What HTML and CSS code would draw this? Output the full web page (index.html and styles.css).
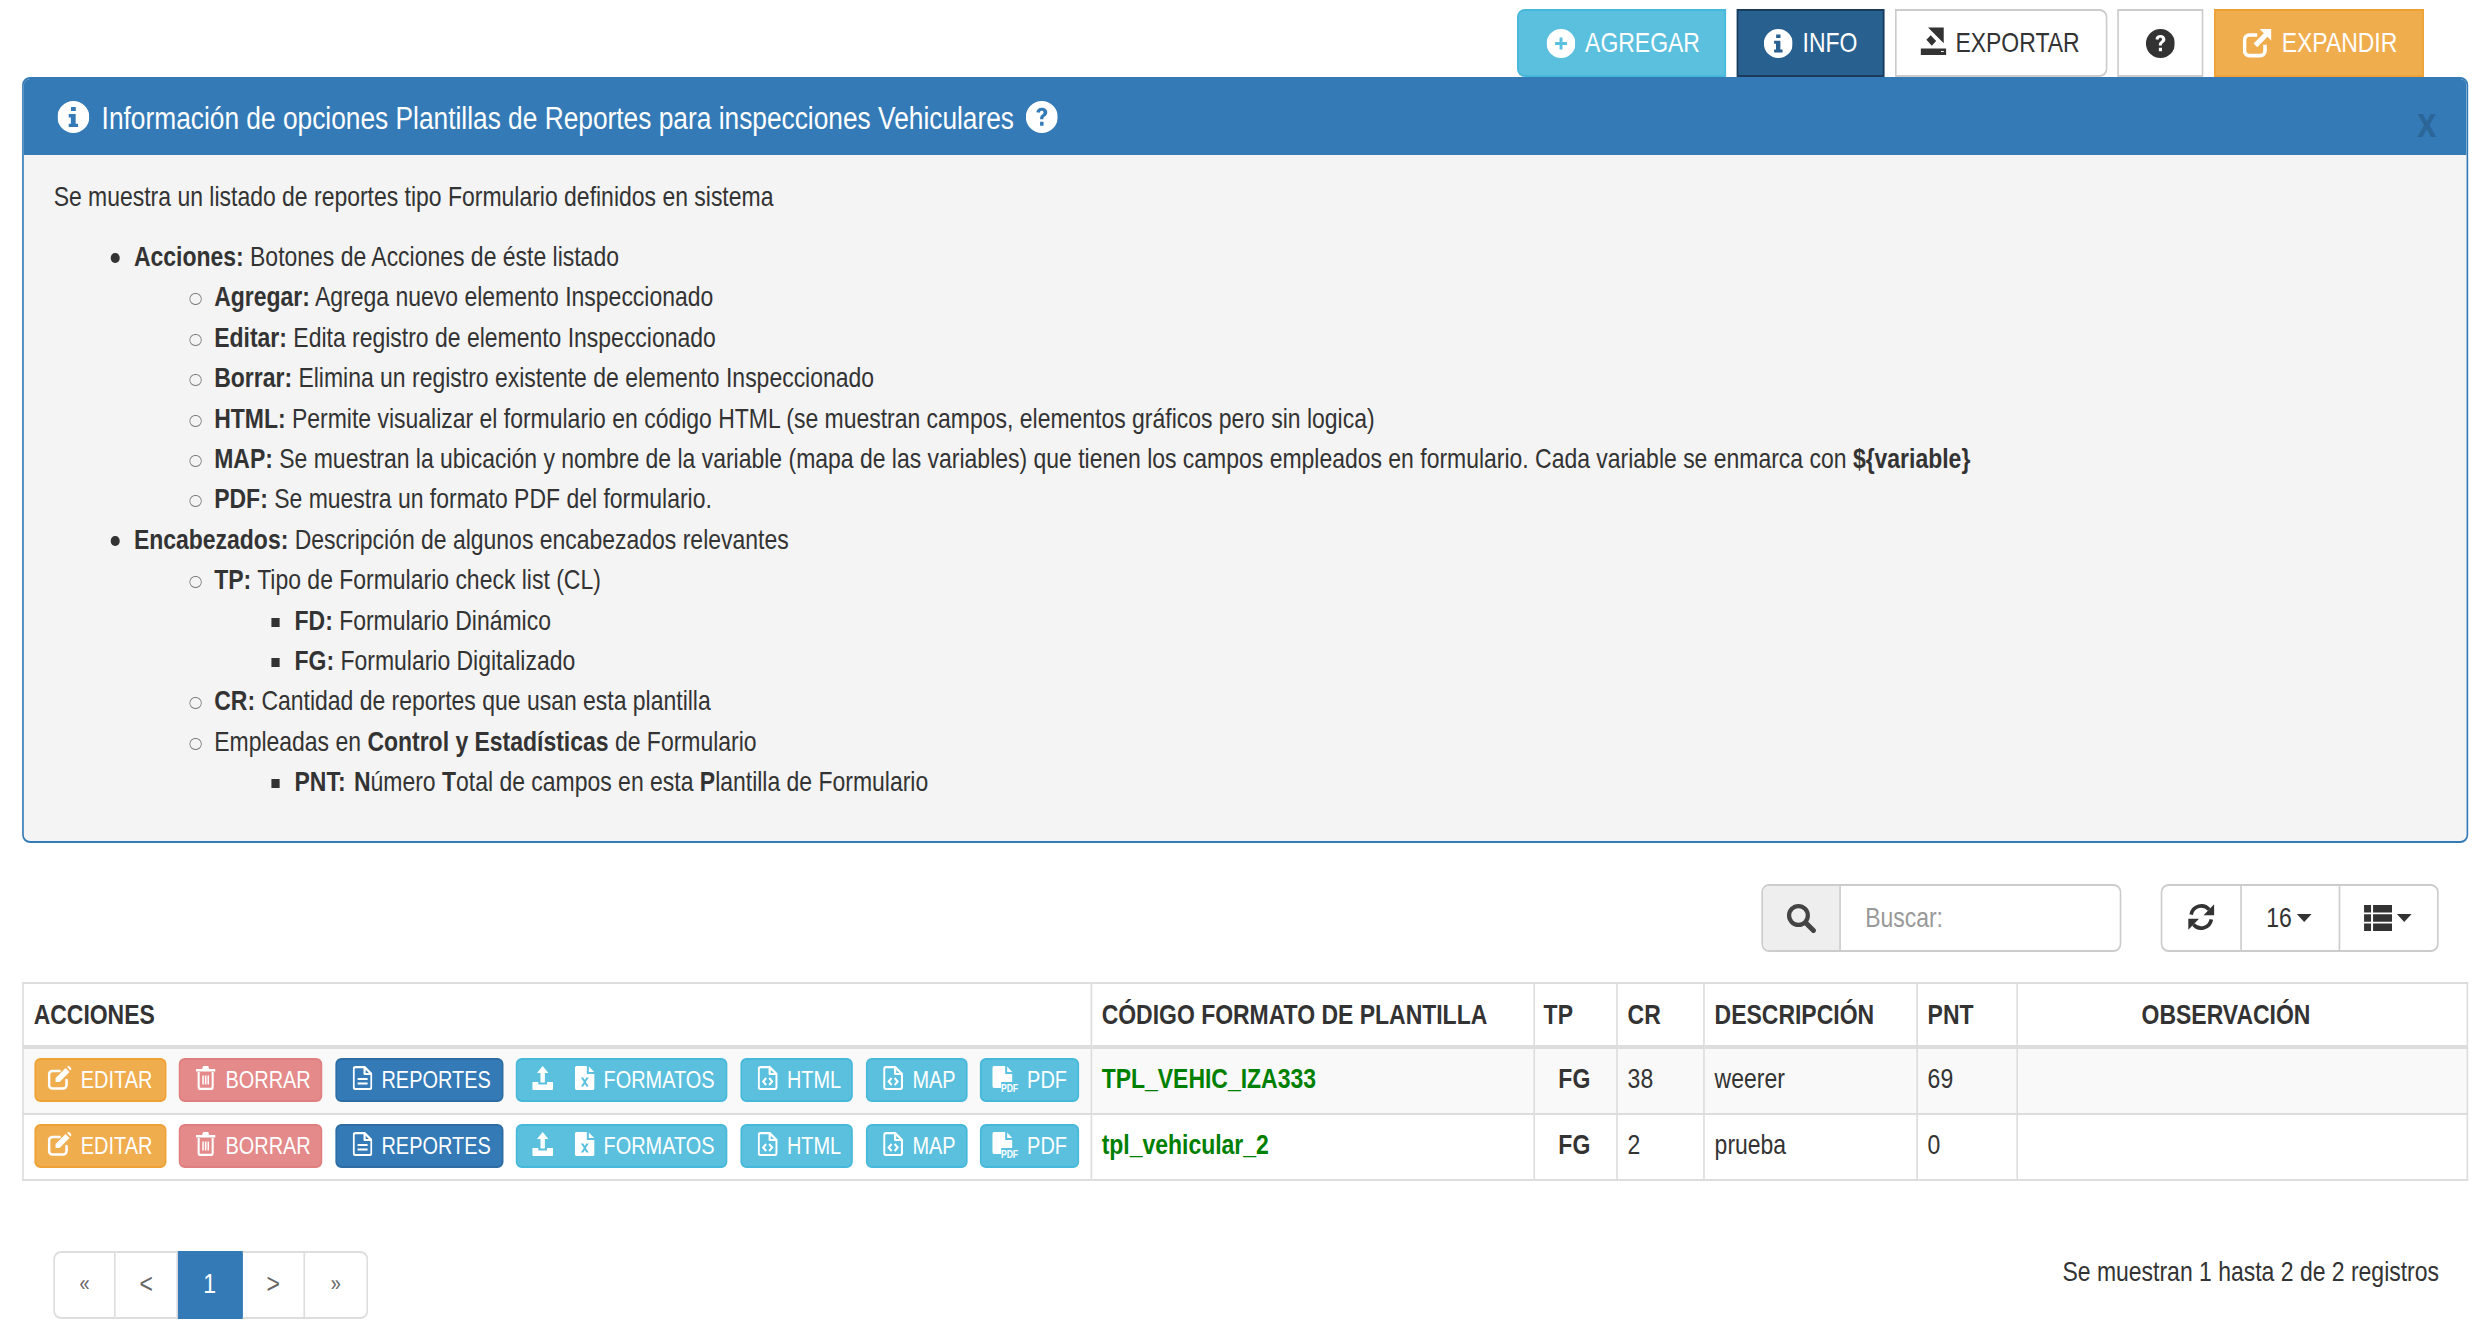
FILE: index.html
```html
<!DOCTYPE html>
<html lang="es">
<head>
<meta charset="utf-8">
<title>Plantillas de Reportes</title>
<link rel="stylesheet" href="styles.css">
</head>
<body>
<svg class="defs" aria-hidden="true">
  <symbol id="i-plus" viewBox="0 0 24 24" preserveAspectRatio="none"><path fill="currentColor" fill-rule="evenodd" d="M12 0a12 12 0 1 0 0 24a12 12 0 1 0 0-24zM10.800 7h2.400v3.800H17v2.400h-3.800V17h-2.400v-3.800H7v-2.400h3.800z"/></symbol>
  <symbol id="i-info" viewBox="0 0 24 24" preserveAspectRatio="none"><path fill="currentColor" fill-rule="evenodd" d="M12 0a12 12 0 1 0 0 24a12 12 0 1 0 0-24zM10.200 4.500h3.600v3h-3.600zM8.500 9.800h5.200v7.200h1.800v2.500h-7V17h1.600v-4.700H8.500z"/></symbol>
  <symbol id="i-help" viewBox="0 0 24 24" preserveAspectRatio="none"><path fill="currentColor" fill-rule="evenodd" d="M12 0a12 12 0 1 0 0 24a12 12 0 1 0 0-24zM12 5c-2.300 0-3.900 1.300-4.100 3.400l2.500.4c.1-1 .7-1.500 1.500-1.500.9 0 1.400.5 1.400 1.200 0 .7-.4 1.100-1 1.600-1.100.8-1.600 1.500-1.600 3v.5h2.500v-.3c0-.8.2-1.100 1-1.700 1.100-.8 1.900-1.700 1.900-3.200C16 6.300 14.300 5 12 5zM10.700 15.500h2.600v3h-2.600z"/></symbol>
  <symbol id="i-export" viewBox="0 0 24 24" preserveAspectRatio="none"><path fill="currentColor" fill-rule="evenodd" d="M7 .5h14.500v13.500zM9.500 7l5 5-4 4-5-5zM0 18.500h24V24H0zM19 20.500h2.500v1H19z"/></symbol>
  <symbol id="i-external" viewBox="0 0 24 24" preserveAspectRatio="none"><path fill="none" stroke="currentColor" stroke-width="3" d="M18.500 13v5a4 4 0 0 1-4 4H5.500a4 4 0 0 1-4-4V9a4 4 0 0 1 4-4H12"/><path fill="currentColor" d="M14 0h10v10l-3.500-3.500L12 15l-3-3 8.500-8.500z"/></symbol>
  <symbol id="i-edit" viewBox="0 0 24 24" preserveAspectRatio="none"><path fill="none" stroke="currentColor" stroke-width="2.600" stroke-linecap="round" d="M19 14v5a3.500 3.500 0 0 1-3.500 3.500H5A3.500 3.500 0 0 1 1.500 19V8.500A3.500 3.500 0 0 1 5 5h7"/><path fill="currentColor" d="M8 12L18 2l4 4-10 10H8zM19.500 .8l.7-.5c.6-.4 1.300-.3 1.800.2l1.500 1.500c.5.5.5 1.300 0 1.800l-.7.7z"/></symbol>
  <symbol id="i-trash" viewBox="0 0 24 24" preserveAspectRatio="none"><path fill="currentColor" d="M9 0h6l1 3h7v2.500H1V3h7z"/><path fill="none" stroke="currentColor" stroke-width="2.400" d="M4 6v15a2 2 0 0 0 2 2h12a2 2 0 0 0 2-2V6"/><path fill="none" stroke="currentColor" stroke-width="1.800" d="M9 9.500v9M12 9.500v9M15 9.500v9"/></symbol>
  <symbol id="i-file" viewBox="0 0 20 24" preserveAspectRatio="none"><path fill="none" stroke="currentColor" stroke-width="2.200" stroke-linejoin="round" d="M3 1.100h9l6.900 6.900V21a2 2 0 0 1-2 2H3a2 2 0 0 1-2-2V3a2 2 0 0 1 2-1.900zM12 1.100V8h6.900"/><path fill="none" stroke="currentColor" stroke-width="2.200" d="M5 13h10M5 17.500h10"/></symbol>
  <symbol id="i-upload" viewBox="0 0 24 24" preserveAspectRatio="none"><path fill="currentColor" d="M12 0l6.500 7H14.500v9.500h-5V7H5.500zM0 16h7v2.500h10V16h7v6.500a1.500 1.500 0 0 1-1.500 1.500h-21A1.500 1.500 0 0 1 0 22.500z"/></symbol>
  <symbol id="i-xls" viewBox="0 0 20 24" preserveAspectRatio="none"><path fill="currentColor" fill-rule="evenodd" d="M2 0h10v8h8v14a2 2 0 0 1-2 2H2a2 2 0 0 1-2-2V2a2 2 0 0 1 2-2zM14 .5L19.500 6H14zM6 11.500l3 4.500-3 4.500h2.500L10 18l1.500 2.500H14l-3-4.500 3-4.500h-2.500L10 14l-1.500-2.500z"/></symbol>
  <symbol id="i-code" viewBox="0 0 20 24" preserveAspectRatio="none"><path fill="none" stroke="currentColor" stroke-width="2.200" stroke-linejoin="round" d="M3 1.100h9l6.900 6.900V21a2 2 0 0 1-2 2H3a2 2 0 0 1-2-2V3a2 2 0 0 1 2-1.900zM12 1.100V8h6.900"/><path fill="none" stroke="currentColor" stroke-width="2" d="M8.500 12l-3 3.500 3 3.500M11.500 12l3 3.500-3 3.500"/></symbol>
  <symbol id="i-pdf" viewBox="0 0 26 26" preserveAspectRatio="none"><path fill="currentColor" fill-rule="evenodd" d="M2 0h11v8h7v8H9v6H2a2 2 0 0 1-2-2V2a2 2 0 0 1 2-2zM15 .5L20 6h-5z"/></symbol>
  <symbol id="i-search" viewBox="0 0 24 24" preserveAspectRatio="none"><circle cx="10" cy="10" r="7.500" fill="none" stroke="currentColor" stroke-width="3.400"/><path stroke="currentColor" stroke-width="4" stroke-linecap="round" d="M16 16l6 6"/></symbol>
  <symbol id="i-refresh" viewBox="0 0 24 24" preserveAspectRatio="none"><path fill="none" stroke="currentColor" stroke-width="3.200" d="M3 10a9.300 9.300 0 0 1 16-4.500M21 14a9.300 9.300 0 0 1-16 4.500"/><path fill="currentColor" d="M23.500 1v9.500h-9.500zM.5 23v-9.500h9.500z"/></symbol>
  <symbol id="i-list" viewBox="0 0 28 24" preserveAspectRatio="none"><path fill="currentColor" d="M0 0h7v7H0zM9 0h19v7H9zM0 8.500h7v7H0zM9 8.500h19v7H9zM0 17h7v7H0zM9 17h19v7H9z"/></symbol>
</svg>

<div class="page">
<div class="toolbar">
  <a class="tb tb-info tb-first"><svg class="ic-tb"><use href="#i-plus"/></svg>AGREGAR</a>
  <a class="tb tb-dark"><svg class="ic-tb"><use href="#i-info"/></svg>INFO</a>
  <a class="tb tb-light tb-last"><svg class="ic-tb ic-export"><use href="#i-export"/></svg>EXPORTAR</a>
  <a class="tb tb-light tb-help"><svg class="ic-tb"><use href="#i-help"/></svg></a>
  <a class="tb tb-warn"><svg class="ic-tb"><use href="#i-external"/></svg>EXPANDIR</a>
</div>

<section class="panel">
  <header class="panel-head">
    <svg class="ic-head"><use href="#i-info"/></svg>
    <span class="panel-title">Información de opciones Plantillas de Reportes para inspecciones Vehiculares</span>
    <svg class="ic-head"><use href="#i-help"/></svg>
    <span class="panel-close">x</span>
  </header>
  <div class="panel-body">
    <p class="intro">Se muestra un listado de reportes tipo Formulario definidos en sistema</p>
    <ul class="info-list">
      <li><b>Acciones:</b> Botones de Acciones de éste listado
        <ul>
          <li><b>Agregar:</b> Agrega nuevo elemento Inspeccionado</li>
          <li><b>Editar:</b> Edita registro de elemento Inspeccionado</li>
          <li><b>Borrar:</b> Elimina un registro existente de elemento Inspeccionado</li>
          <li><b>HTML:</b> Permite visualizar el formulario en código HTML (se muestran campos, elementos gráficos pero sin logica)</li>
          <li><b>MAP:</b> Se muestran la ubicación y nombre de la variable (mapa de las variables) que tienen los campos empleados en formulario. Cada variable se enmarca con <b>${variable}</b></li>
          <li><b>PDF:</b> Se muestra un formato PDF del formulario.</li>
        </ul>
      </li>
      <li><b>Encabezados:</b> Descripción de algunos encabezados relevantes
        <ul>
          <li><b>TP:</b> Tipo de Formulario check list (CL)
            <ul>
              <li><b>FD:</b> Formulario Dinámico</li>
              <li><b>FG:</b> Formulario Digitalizado</li>
            </ul>
          </li>
          <li><b>CR:</b> Cantidad de reportes que usan esta plantilla</li>
          <li>Empleadas en <b>Control y Estadísticas</b> de Formulario
            <ul>
              <li><b>PNT:</b> <b class="pnt-n">N</b>úmero <b>T</b>otal de campos en esta <b>P</b>lantilla de Formulario</li>
            </ul>
          </li>
        </ul>
      </li>
    </ul>
  </div>
</section>

<div class="controls">
  <div class="search">
    <span class="search-addon"><svg class="ic-ctl"><use href="#i-search"/></svg></span>
    <span class="search-input">Buscar:</span>
  </div>
  <div class="ctl-group">
    <span class="ctl ctl-refresh"><svg class="ic-ref"><use href="#i-refresh"/></svg></span>
    <span class="ctl ctl-size">16<i class="caret"></i></span>
    <span class="ctl ctl-cols"><svg class="ic-list"><use href="#i-list"/></svg><i class="caret"></i></span>
  </div>
</div>

<table class="grid">
  <thead>
    <tr>
      <th class="c-act">ACCIONES</th>
      <th class="c-code">CÓDIGO FORMATO DE PLANTILLA</th>
      <th class="c-tp">TP</th>
      <th class="c-cr">CR</th>
      <th class="c-desc">DESCRIPCIÓN</th>
      <th class="c-pnt">PNT</th>
      <th class="c-obs">OBSERVACIÓN</th>
    </tr>
  </thead>
  <tbody>
    <tr class="odd">
      <td class="actions">
        <div class="btns">
          <a class="b b-warn"><svg class="ic"><use href="#i-edit"/></svg>EDITAR</a>
          <a class="b b-danger"><svg class="ic ic-trash"><use href="#i-trash"/></svg>BORRAR</a>
          <a class="b b-primary"><svg class="ic ic-n"><use href="#i-file"/></svg>REPORTES</a>
          <a class="b b-info b-formatos"><svg class="ic ic-up"><use href="#i-upload"/></svg><svg class="ic ic-n"><use href="#i-xls"/></svg>FORMATOS</a>
          <a class="b b-info b-html"><svg class="ic ic-n"><use href="#i-code"/></svg>HTML</a>
          <a class="b b-info b-map"><svg class="ic ic-n"><use href="#i-code"/></svg>MAP</a>
          <a class="b b-info b-pdf"><span class="pdf-ic"><svg class="ic-p"><use href="#i-pdf"/></svg><i class="pdf-mark">PDF</i></span>PDF</a>
        </div>
      </td>
      <td class="code">TPL_VEHIC_IZA333</td>
      <td class="tp">FG</td>
      <td>38</td>
      <td>weerer</td>
      <td>69</td>
      <td></td>
    </tr>
    <tr>
      <td class="actions">
        <div class="btns">
          <a class="b b-warn"><svg class="ic"><use href="#i-edit"/></svg>EDITAR</a>
          <a class="b b-danger"><svg class="ic ic-trash"><use href="#i-trash"/></svg>BORRAR</a>
          <a class="b b-primary"><svg class="ic ic-n"><use href="#i-file"/></svg>REPORTES</a>
          <a class="b b-info b-formatos"><svg class="ic ic-up"><use href="#i-upload"/></svg><svg class="ic ic-n"><use href="#i-xls"/></svg>FORMATOS</a>
          <a class="b b-info b-html"><svg class="ic ic-n"><use href="#i-code"/></svg>HTML</a>
          <a class="b b-info b-map"><svg class="ic ic-n"><use href="#i-code"/></svg>MAP</a>
          <a class="b b-info b-pdf"><span class="pdf-ic"><svg class="ic-p"><use href="#i-pdf"/></svg><i class="pdf-mark">PDF</i></span>PDF</a>
        </div>
      </td>
      <td class="code">tpl_vehicular_2</td>
      <td class="tp">FG</td>
      <td>2</td>
      <td>prueba</td>
      <td>0</td>
      <td></td>
    </tr>
  </tbody>
</table>

<div class="foot">
  <nav class="pager">
    <a class="pg pg-small">«</a>
    <a class="pg">&lt;</a>
    <a class="pg pg-active">1</a>
    <a class="pg">&gt;</a>
    <a class="pg pg-small">»</a>
  </nav>
  <div class="summary">Se muestran 1 hasta 2 de 2 registros</div>
</div>
</div>
</body>
</html>
```
FILE: styles.css
```css
/* The reference's type is condensed to 82% of its width. The page is laid out
   wider by --k and narrowed as a whole, so horizontal lengths go through --k. */
:root { --k: 1.219512; --bx: calc(2px * var(--k)); }
* { box-sizing: border-box; }
html, body { margin: 0; width: 2479px; height: 1340px; overflow: hidden; background: #fff; }
.page {
  width: calc(2478px * var(--k));
  height: 1340px;
  overflow: hidden;
  transform: scaleX(.82);
  transform-origin: 0 0;
  color: #333;
  font-family: "Liberation Sans", Arial, sans-serif;
  font-size: 28px;
  line-height: 40.4px;
}
.defs { position: absolute; width: 0; height: 0; }

/* toolbar */
.toolbar { display: flex; justify-content: flex-end; gap: calc(10.5px * var(--k)); height: 77px; padding: 9px calc(54px * var(--k)) 0 0; }
.tb { display: flex; align-items: center; justify-content: center; gap: calc(10px * var(--k)); height: 68px; border-style: solid; border-width: 2px var(--bx); }
.tb-info { width: calc(209px * var(--k)); background: #5bc0de; border-color: #46b8da; color: #fff; padding-left: calc(3px * var(--k)); }
.tb-first { border-radius: calc(8px * var(--k)) 0 0 calc(8px * var(--k)) / 8px 0 0 8px; }
.tb-dark { width: calc(148px * var(--k)); background: #286090; border-color: #1a3b5c; color: #fff; }
.tb-light { background: #fff; border-color: #ccc; color: #333; }
.tb-last { width: calc(212px * var(--k)); border-radius: 0 calc(8px * var(--k)) calc(8px * var(--k)) 0 / 0 8px 8px 0; gap: calc(9px * var(--k)); padding-right: calc(2px * var(--k)); }
.tb-help { width: calc(86px * var(--k)); }
.tb-warn { width: calc(210px * var(--k)); background: #f0ad4e; border-color: #eea236; color: #fff; padding-left: calc(2px * var(--k)); }
.ic-tb { width: calc(29px * var(--k)); height: 29px; }
.ic-export { width: calc(26px * var(--k)); margin-top: -5px; height: 28px; }

/* panel */
.panel { margin: 0 calc(10px * var(--k)) 0 calc(22px * var(--k)); height: 766px; border: 2px solid #337ab7; border-width: 2px var(--bx); border-radius: calc(8px * var(--k)) / 8px; background: #f4f4f4; overflow: hidden; }
.panel-head { position: relative; display: flex; align-items: center; gap: calc(12px * var(--k)); height: 76px; padding: 0 0 0 calc(34px * var(--k)); background: #337ab7; color: #fff; font-size: 32.1px; }
.panel-title { position: relative; top: 1px; }
.ic-head { width: calc(32px * var(--k)); height: 32px; flex: none; }
.panel-close { position: absolute; right: calc(30px * var(--k)); top: 24px; color: #2c6597; font-weight: bold; font-size: 42px; }
.panel-body { padding: 21.500px calc(30px * var(--k)) 0; }
.intro { margin: 0 0 20px; }
.info-list, .info-list ul { margin: 0; padding-left: calc(80.300px * var(--k)); list-style: none; }
.info-list li { position: relative; }
.info-list li::before { content: ""; position: absolute; left: calc(-23px * var(--k)); top: 16px; width: calc(8.500px * var(--k)); height: 10px; border-radius: 50%; background: #333; }
.info-list ul > li::before { left: calc(-24.500px * var(--k)); top: 16px; width: calc(10px * var(--k)); height: 10px; background: transparent; border: 1.500px solid #777; border-width: 1.500px calc(1.500px * var(--k)); }
.info-list ul ul > li::before { left: calc(-23.500px * var(--k)); top: 17px; width: calc(9px * var(--k)); height: 9px; border-radius: 0; background: #333; border: 0; }
.pnt-n { margin-left: calc(2px * var(--k)); }
b { font-weight: bold; }

/* controls */
.controls { display: flex; justify-content: flex-end; gap: calc(39.500px * var(--k)); margin-top: 41px; padding-right: calc(39px * var(--k)); height: 68px; }
.search { display: flex; width: calc(360px * var(--k)); border: 2px solid #ccc; border-width: 2px var(--bx); border-radius: calc(8px * var(--k)) / 8px; overflow: hidden; }
.search-addon { display: flex; align-items: center; justify-content: center; width: calc(78px * var(--k)); background: #eee; border-right: var(--bx) solid #ccc; color: #444; }
.search-input { display: flex; align-items: center; padding-left: calc(24px * var(--k)); color: #999; }
.ic-ctl { width: calc(30px * var(--k)); height: 30px; }
.ic-ref { width: calc(27px * var(--k)); height: 28px; margin-top: -2px; }
.ctl-group { display: flex; width: calc(278px * var(--k)); border: 2px solid #ccc; border-width: 2px var(--bx); border-radius: calc(8px * var(--k)) / 8px; }
.ctl { display: flex; align-items: center; justify-content: center; gap: calc(5px * var(--k)); border-left: var(--bx) solid #ccc; }
.ctl-refresh { width: calc(78px * var(--k)); border-left: 0; }
.ctl-size { width: calc(98px * var(--k)); padding-right: calc(3px * var(--k)); }
.ctl-cols { flex: 1; padding-right: calc(2px * var(--k)); }
.ic-list { width: calc(28px * var(--k)); height: 26px; }
.caret { width: 0; height: 0; border-left: calc(8px * var(--k)) solid transparent; border-right: calc(8px * var(--k)) solid transparent; border-top: 8px solid #333; }

/* table */
.grid { width: calc(2446px * var(--k)); margin: 30px 0 0 calc(22px * var(--k)); border-collapse: collapse; table-layout: fixed; }
.grid th, .grid td { border: 2px solid #ddd; border-left-width: var(--bx); border-right-width: var(--bx); padding: 0 calc(10px * var(--k)); text-align: left; }
.grid th { height: 64px; border-bottom-width: 4px; font-weight: bold; padding-top: 1px; }
.grid td { height: 66.500px; padding-bottom: 4px; }
.grid td.actions { padding: 0 0 2px calc(10.500px * var(--k)); }
.odd td { background: #f9f9f9; }
.c-act { width: calc(1069px * var(--k)); }
.c-code { width: calc(442px * var(--k)); }
.c-tp { width: calc(83px * var(--k)); }
.c-cr { width: calc(87px * var(--k)); }
.c-desc { width: calc(213px * var(--k)); }
.c-pnt { width: calc(100px * var(--k)); }
.grid th.c-code, .grid td.code, .grid th.c-tp { padding-left: calc(9px * var(--k)); }
.grid th.c-obs { text-align: center; padding-right: calc(42px * var(--k)); }
.grid td.tp { text-align: center; font-weight: bold; padding-right: calc(12px * var(--k)); }
.grid td.code { color: #008000; font-weight: bold; }
.btns { display: flex; gap: calc(12.500px * var(--k)); }
.b { display: flex; align-items: center; justify-content: center; gap: calc(9px * var(--k)); height: 44px; border-style: solid; border-width: 2px var(--bx); border-radius: calc(6px * var(--k)) / 6px; color: #fff; font-size: 24.300px; }
.ic { width: calc(24px * var(--k)); height: 24px; flex: none; margin-top: -3px; }
.ic-n { width: calc(20px * var(--k)); }
.ic-trash { width: calc(21px * var(--k)); }
.ic-up { width: calc(21px * var(--k)); margin-right: calc(12px * var(--k)); }
.pdf-ic { position: relative; flex: none; width: calc(26px * var(--k)); height: 26px; margin-top: -2px; }
.ic-p { display: block; width: 100%; height: 100%; }
.pdf-mark { position: absolute; right: 0; bottom: -1px; font: bold 10.500px/10px "Liberation Sans", sans-serif; }
.b-warn { width: calc(132px * var(--k)); background: #f0ad4e; border-color: #eea236; }
.b-danger { width: calc(144px * var(--k)); background: #e48a8a; border-color: #df7f7f; padding-left: calc(5px * var(--k)); }
.b-primary { width: calc(168px * var(--k)); background: #337ab7; border-color: #2e6da4; padding-left: calc(5px * var(--k)); }
.b-info { background: #5bc0de; border-color: #46b8da; }
.b-formatos { width: calc(212px * var(--k)); padding-left: calc(4px * var(--k)); }
.b-html { width: calc(113px * var(--k)); padding-left: calc(6px * var(--k)); }
.b-map { width: calc(102px * var(--k)); padding-left: calc(6px * var(--k)); }
.b-pdf { width: calc(99px * var(--k)); }

/* footer */
.foot { display: flex; justify-content: space-between; margin-top: 69.500px; padding: 0 calc(39px * var(--k)) 0 calc(53px * var(--k)); }
.pager { display: flex; height: 68px; }
.pg { display: flex; align-items: center; justify-content: center; width: calc(62px * var(--k)); border: 2px solid #ddd; border-width: 2px var(--bx) 2px 0; color: #666; }
.pg:first-child { width: calc(63px * var(--k)); border-left-width: var(--bx); border-radius: calc(8px * var(--k)) 0 0 calc(8px * var(--k)) / 8px 0 0 8px; }
.pg:last-child { width: calc(63px * var(--k)); border-radius: 0 calc(8px * var(--k)) calc(8px * var(--k)) 0 / 0 8px 8px 0; }
.pg-small { font-size: 22px; }
.pg-active { width: calc(65px * var(--k)); background: #337ab7; border-color: #337ab7; color: #fff; }
.summary { margin-top: 1px; }
```
